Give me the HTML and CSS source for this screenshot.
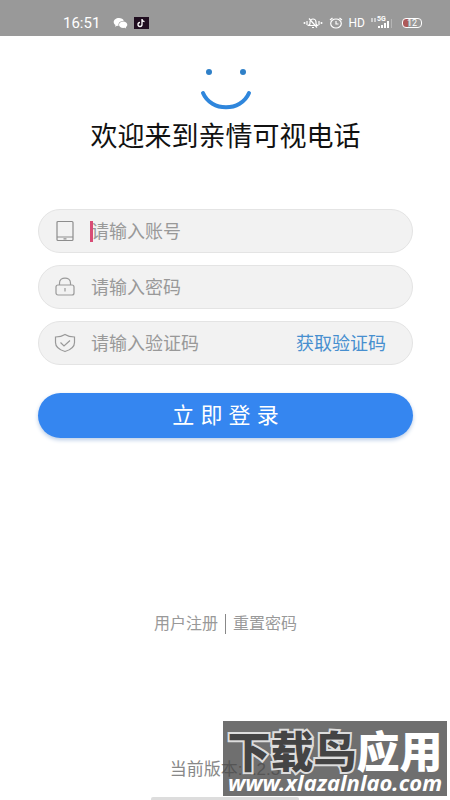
FILE: index.html
```html
<!DOCTYPE html>
<html lang="zh-CN">
<head>
<meta charset="utf-8">
<meta name="viewport" content="width=device-width, initial-scale=1">
<title>亲情可视电话</title>
<link rel="stylesheet" href="styles.css">
</head>
<body>
<div class="screen">
  <header class="status">
    <div class="status-group">
      <span class="clock">16:51</span>
      <svg class="chat" viewBox="0 0 15 12" width="15" height="12" aria-hidden="true"><path d="M6 1C3 1 .7 2.800 .7 5c0 1.300.7 2.300 1.800 3L2 9.800 4 8.800l1.500.2C5 6 7 3.800 10.800 3.700 10.200 2 8.300 1 6 1zM10.200 4.500C7.800 4.500 6 5.900 6 7.700s1.800 3.200 4.200 3.200l1.300-.2 1.700.9-.4-1.500c.9-.6 1.500-1.400 1.500-2.400 0-1.800-1.800-3.200-4.100-3.200z" fill="#fff"/></svg>
      <svg viewBox="0 0 15 12" width="15" height="12" aria-hidden="true"><path d="M0 0h15v12H0z" fill="#200e20"/><path d="M8 2v5.500a2 2 0 1 1-2-2M8 2.500c.3 1.300 1.200 2 2.500 2.100" fill="none" stroke="#fff" stroke-width="1.300"/></svg>
    </div>
    <div class="status-group">
      <svg viewBox="0 0 20 12" width="20" height="12" aria-hidden="true"><g fill="none" stroke="#fff" stroke-width="1.200"><path d="M5.500 8.500h9l-1.500-1.500V5a3 3 0 0 0-6 0v2zM9 10.500h2M6 1.500l8 9M4 4v4M16 4v4"/></g><circle cx="1.500" cy="6" r="1" fill="#fff"/><circle cx="18.500" cy="6" r="1" fill="#fff"/></svg>
      <svg viewBox="0 0 14 12" width="14" height="12" aria-hidden="true"><g fill="none" stroke="#fff" stroke-width="1.200"><ellipse cx="7" cy="6.500" rx="5.300" ry="4.500"/><path d="M1 3l2.500-2M13 3l-2.500-2M7 4v3h2.500"/></g></svg>
      <span class="hd">HD</span>
      <span class="signal"><span class="net">5G</span><svg viewBox="0 0 21 12" width="21" height="12" aria-hidden="true"><path d="M0 2h5M0 4h5" stroke="#fff" stroke-dasharray="2 1"/><path d="M7 9h2v2H7zM10 8h2v3h-2zM13 6h2v5h-2zM16 4h2v7h-2z" fill="#fff"/><path d="M20 2h1v9h-1z" fill="#b5b5b5"/></svg></span>
      <span class="battery">12</span>
    </div>
  </header>

  <main class="login">
    <svg class="smile" viewBox="0 0 52 44" width="52" height="44" aria-hidden="true"><circle cx="9" cy="4" r="3" fill="#2f80c8"/><circle cx="43" cy="4" r="3" fill="#2f80c8"/><path d="M3 25C11 44 41 44 49 25" fill="none" stroke="#2f86dc" stroke-width="4" stroke-linecap="round"/></svg>
    <h1>欢迎来到亲情可视电话</h1>
    <form class="form">
      <div class="field">
        <svg viewBox="0 0 22 22" width="22" height="22" aria-hidden="true"><g fill="none" stroke="#8d8d8d" stroke-width="1.200"><rect x="3" y="1.500" width="16" height="19" rx="1"/><path d="M3 17h16M9.500 18.800h3"/></g></svg>
        <span class="caret"></span>
        <input type="text" aria-label="账号" placeholder="请输入账号">
      </div>
      <div class="field">
        <svg viewBox="0 0 22 22" width="22" height="22" aria-hidden="true"><g fill="none" stroke="#999" stroke-width="1.200"><rect x="2" y="9" width="18" height="10" rx="2"/><path d="M5.500 9V7c0-6.500 11-6.500 11 0v2M11 12v3.500"/></g></svg>
        <input type="password" aria-label="密码" placeholder="请输入密码">
      </div>
      <div class="field">
        <svg viewBox="0 0 22 22" width="22" height="22" aria-hidden="true"><g fill="none" stroke="#999" stroke-width="1.200"><path d="M11 2.500C8 4.500 5 5 1.500 5v5.500c0 4.500 4.500 7.500 9.500 9 5-1.500 9.500-4.500 9.500-9V5C17 5 14 4.500 11 2.500z"/><path d="M6.500 10.500l3.500 3.500 6-5.500"/></g></svg>
        <input type="text" aria-label="验证码" placeholder="请输入验证码">
        <button class="code" type="button">获取验证码</button>
      </div>
      <button class="submit" type="submit">立 即 登 录</button>
    </form>
    <nav class="links"><a href="#register">用户注册</a><a href="#reset">重置密码</a></nav>
  </main>

  <footer class="version">当前版本:1.2.3</footer>
  <div class="home-bar"></div>
  <aside class="watermark">
    <div class="brand"><span class="dark">下载鸟</span>应用</div>
    <div class="site">www.xlazalnlao.com</div>
  </aside>
</div>
</body>
</html>
```
FILE: styles.css
```css
* { box-sizing: border-box; }

body {
  margin: 0;
  background: #fff;
  color: #111;
  font-family: "Liberation Sans", "Noto Sans CJK SC", sans-serif;
}

.screen {
  position: relative;
  display: flex;
  flex-direction: column;
  min-height: 100vh;
  overflow: hidden;
}

.status {
  display: flex;
  justify-content: space-between;
  align-items: center;
  height: 36px;
  padding: 10px 28px 0 63px;
  background: #999;
  color: #fff;
}

.status-group { display: flex; align-items: center; gap: 6px; }
.clock { width: 44px; font: 15px/16px Roboto, sans-serif; }
.hd { font: 12px/14px Roboto, sans-serif; }
.signal { position: relative; display: flex; }
.net { position: absolute; left: 6px; top: -1px; font: bold 7px/7px Roboto, sans-serif; }

.battery {
  width: 20px;
  height: 10px;
  margin-left: 4px;
  border: 1px solid #fff;
  border-radius: 4px;
  background: linear-gradient(90deg, #ad5a5a 5px, #999 5px);
  font: 9px/8px Roboto, sans-serif;
  text-align: center;
}

.login {
  display: flex;
  flex: 1;
  flex-direction: column;
  align-items: center;
  padding: 32px 37px 0 38px;
}

.smile { display: block; }

h1 {
  margin: 5px 0 0;
  font-size: 27px;
  font-weight: 400;
  line-height: 40px;
  white-space: nowrap;
}

.form {
  display: flex;
  flex-direction: column;
  gap: 12px;
  width: 100%;
  margin-top: 52px;
}

.field {
  position: relative;
  display: flex;
  align-items: center;
  gap: 15px;
  height: 44px;
  padding: 0 26px 0 15px;
  border: 1px solid #e4e4e4;
  border-radius: 22px;
  background: #f2f2f2;
}

.field svg { flex: none; }

.field input {
  flex: 1;
  min-width: 0;
  padding: 2px 0 0;
  border: 0;
  outline: 0;
  background: transparent;
  font: inherit;
  font-size: 18px;
  line-height: 28px;
}

.field input::placeholder { color: #999; opacity: 1; }

.caret {
  position: absolute;
  left: 51px;
  top: 11px;
  width: 3px;
  height: 21px;
  background: #d84c76;
}

button { padding: 0; border: 0; font: inherit; cursor: pointer; }
.code { padding-top: 2px; background: none; color: #478fcf; font-size: 18px; line-height: 28px; }

.submit {
  height: 45px;
  margin-top: 16px;
  border-radius: 23px;
  background: #3586f0;
  box-shadow: 0 2px 4px #b9cce6;
  color: #fff;
  font-size: 22px;
  line-height: 44px;
}

.links {
  display: flex;
  align-items: center;
  margin-top: auto;
  padding-bottom: 124px;
}

.links a { color: #999; font-size: 16px; line-height: 20px; text-decoration: none; }
.links a + a { margin-left: 7px; padding-left: 7px; border-left: 1px solid #888; }

.version {
  padding-bottom: 15px;
  color: #888;
  font-size: 17px;
  line-height: 24px;
  text-align: center;
}

.home-bar { width: 33%; height: 3px; margin: 0 auto; background: #ddd; border-radius: 2px 2px 0 0; }

.watermark {
  position: absolute;
  right: 3px;
  bottom: 4px;
  width: 224px;
  height: 75px;
  background: rgba(70, 70, 70, 0.78);
  color: #fff;
  text-align: center;
  white-space: nowrap;
}

.brand {
  padding-top: 6px;
  font: 900 43px/44px "Noto Sans CJK SC", sans-serif;
}

.dark { color: #444; -webkit-text-stroke: 4px #ddd; paint-order: stroke fill; }
.site { font: italic bold 22px/22px "Noto Sans", sans-serif; }
```
